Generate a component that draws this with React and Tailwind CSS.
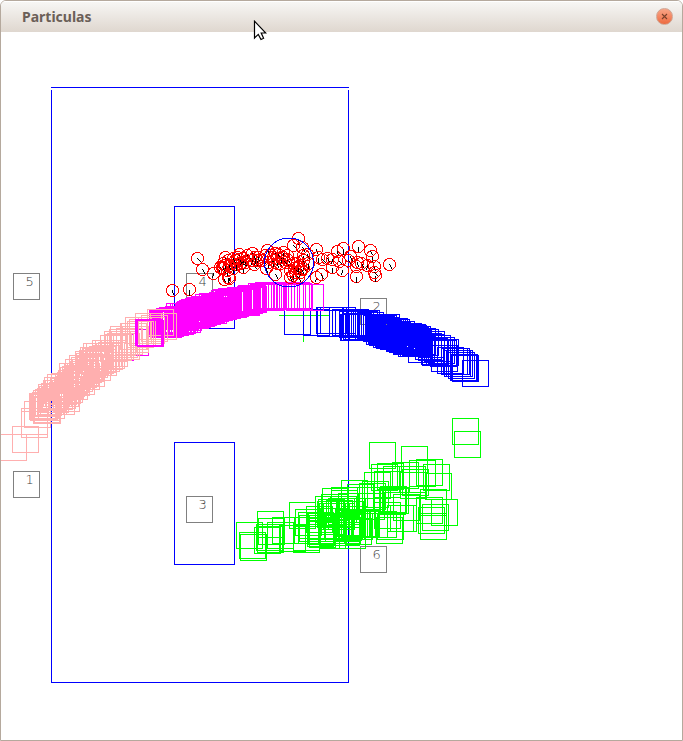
import React from "react";

// Particle positions: top-left corners of 26px squares, [x, y] pairs in thirds of a pixel.
const GREEN = { ox: 220, oy: 400, pts: [[697,55],[703,94],[448,127],[544,139],[454,193],[472,190],[463,214],[433,217],[490,199],[517,187],[568,181],[589,178],[610,193],[616,220],[547,208],[541,217],[536,199],[364,241],[382,253],[427,244],[418,250],[334,262],[334,271],[385,262],[355,280],[286,289],[295,298],[292,304],[325,295],[331,289],[208,307],[259,319],[226,328],[235,337],[238,346],[112,334],[115,355],[49,367],[58,397],[61,403],[103,382],[109,373],[112,379],[142,367],[157,352],[178,376],[220,373],[223,352],[262,361],[268,364],[220,379],[310,310],[349,337],[301,325],[346,343],[364,334],[379,340],[388,334],[397,330],[463,307],[472,340],[469,352],[451,334],[424,334],[487,262],[481,259],[520,283],[511,316],[502,316],[601,268],[589,292],[607,313],[595,322],[601,340],[634,298],[358,367],[298,367],[340,346],[400,332],[412,262],[358,295],[415,280],[355,340],[265,340],[295,350],[343,352],[352,304],[376,355],[325,310],[301,358],[307,304],[304,283],[298,310],[262,337],[265,355],[268,346],[307,265],[319,301],[346,328],[352,331],[358,328],[370,334],[349,304],[340,358],[301,340],[316,340],[478,265]] };
const BLUE = { ox: 260, oy: 220, pts: [[73,265],[130,268],[169,262],[172,271],[181,262],[208,262],[217,268],[226,270],[238,274],[241,283],[244,283],[247,268],[250,280],[170,262],[256,278],[262,272],[268,283],[274,274],[280,271],[286,283],[292,277],[298,283],[304,283],[310,286],[316,286],[319,295],[322,286],[328,298],[334,295],[340,304],[346,301],[340,283],[352,295],[355,304],[361,310],[364,295],[370,298],[376,310],[379,316],[385,304],[388,319],[394,316],[400,325],[406,310],[412,313],[415,330],[421,316],[427,322],[430,331],[418,313],[436,328],[445,349],[448,325],[457,328],[466,340],[475,343],[484,355],[487,358],[493,346],[499,358],[505,352],[511,361],[514,376],[517,358],[532,382],[544,385],[550,385],[553,391],[559,390],[565,397],[571,403],[574,403],[577,406],[607,421],[323,292],[343,298],[367,304],[382,313],[409,319],[424,325],[475,334],[427,328],[433,319],[421,331],[325,289],[331,286],[337,292],[349,307],[358,298],[373,307],[391,310],[397,319],[403,322]] };
const MAGENTA = { ox: 140, oy: 200, pts: [[472,253],[436,250],[430,247],[418,250],[439,253],[412,247],[400,247],[394,250],[385,250],[376,247],[367,250],[358,250],[352,247],[346,247],[355,253],[340,253],[325,250],[331,253],[298,256],[280,268],[276,265],[270,262],[262,262],[256,268],[250,265],[244,265],[247,271],[238,268],[232,271],[226,274],[220,268],[214,271],[208,276],[202,280],[196,280],[190,281],[184,282],[178,280],[172,289],[166,282],[160,292],[154,289],[148,293],[142,290],[136,293],[133,304],[130,302],[124,297],[118,300],[112,302],[108,307],[103,317],[97,310],[91,310],[85,317],[79,310],[73,322],[64,320],[58,320],[55,325],[52,331],[40,328],[34,331],[30,334],[28,331],[4,346],[295,256],[300,258],[205,278],[181,290],[151,296],[121,305],[61,325],[37,334],[289,262],[265,265],[292,259],[283,262],[241,274],[235,265],[223,277],[211,280],[199,283],[187,286],[175,292],[163,295],[145,301],[139,298],[127,307],[115,307],[106,313],[94,319],[88,322],[82,325],[76,319],[67,328],[49,325],[43,334],[46,334]] };
const MAGENTA_TAIL = { ox: 140, oy: 200, pts: [[-12,358],[-10,361],[-15,358]] };
const MAGENTA_STRAY = { ox: 140, oy: 200, pts: [[-54,386],[-98,403]] };
const PINK = { ox: 0, oy: 260, pts: [[1,523],[37,499],[64,454],[64,445],[73,424],[88,400],[91,403],[97,397],[100,412],[103,409],[100,391],[106,388],[115,373],[112,385],[121,385],[127,379],[130,361],[133,352],[142,343],[139,370],[145,385],[148,367],[154,340],[157,360],[163,352],[160,375],[169,349],[172,337],[178,310],[181,322],[184,340],[187,319],[190,328],[193,310],[196,298],[202,310],[205,325],[208,286],[211,304],[217,298],[220,310],[226,274],[226,289],[232,286],[235,300],[241,262],[244,274],[247,265],[250,250],[253,283],[259,250],[262,262],[268,259],[271,268],[277,241],[280,256],[286,241],[289,250],[295,247],[301,226],[304,241],[313,214],[316,223],[322,220],[328,208],[331,199],[334,214],[340,220],[349,205],[361,190],[367,199],[364,190],[376,172],[382,184],[388,178],[406,160],[415,172],[424,166],[442,148],[451,160],[100,403],[94,400],[103,412],[115,397],[118,379],[124,370],[136,361],[151,355],[166,340],[175,331],[199,316],[214,292],[229,280],[238,271],[256,268]] };

// Heading particles: circle centres, in thirds of a pixel.
const CIRCLES_A = [[97,271],[148,266],[172,175],[187,208],[218,220],[252,238],[265,232],[255,172],[250,190],[245,200],[250,205],[240,200],[265,180],[262,210],[275,190],[280,205],[285,180],[290,170],[296,163],[300,190],[310,200],[315,185],[308,175],[320,165],[335,160],[335,180],[343,193],[350,180],[355,172],[345,170],[365,180],[381,151],[375,165],[390,165],[385,185],[378,205],[400,180],[405,160],[406,221],[410,175],[420,190],[428,155],[430,170],[440,165],[436,185],[445,180],[450,210],[460,190],[460,225],[470,190],[475,115],[460,135],[487,140],[470,205],[465,215],[480,195],[490,180],[490,165],[490,205],[475,230],[480,215],[450,230],[256,196],[268,196],[289,193],[305,185],[298,178],[400,170],[415,163],[424,172],[410,190],[474,200],[462,205],[484,208],[268,234],[278,175]];
const CIRCLES_B = [[169,88],[175,110],[185,118],[200,115],[167,172],[184,163],[217,142],[232,94],[250,85],[236,122],[265,120],[247,151],[271,109],[293,79],[292,125],[287,169],[287,139],[302,130],[322,136],[331,91],[337,109],[343,139],[346,166],[343,157],[388,133],[217,118],[142,103],[145,130]];
const TICKS = [[1, 5], [0, 6], [4, 4], [3, 5], [-1, 5], [2, 5], [0, 5]];

const LABELS = [
  { n: "5", x: 13, y: 273 },
  { n: "1", x: 13, y: 471 },
  { n: "4", x: 186, y: 273 },
  { n: "3", x: 186, y: 496 },
  { n: "2", x: 360, y: 298 },
  { n: "6", x: 360, y: 546 },
];

function Squares({ set, color }) {
  return (
    <g stroke={color}>
      {set.pts.map(([x, y], i) => (
        <rect key={i} x={set.ox + Math.round(x / 3)} y={set.oy + Math.round(y / 3)} width="26" height="26" />
      ))}
    </g>
  );
}

function Headings({ pts, ox, oy }) {
  return pts.map(([x, y], i) => {
    const cx = ox + Math.round(x / 3);
    const cy = oy + Math.round(y / 3);
    const [dx, dy] = TICKS[i % TICKS.length];
    return (
      <g key={i}>
        <circle cx={cx} cy={cy} r="6" stroke="#ff0000" />
        <path d={`M${cx} ${cy}l${dx} ${dy}`} stroke="#000000" />
      </g>
    );
  });
}

function Simulation() {
  return (
    <svg
      role="img"
      aria-label="Particulas"
      viewBox="1 32 681 708"
      width="681"
      height="708"
      className="block max-w-none shrink-0"
      fill="none"
      shapeRendering="crispEdges"
    >
      <g transform="translate(0.5 0.5)">
        <g stroke="#808080">
          {LABELS.map(({ n, x, y }) => (
            <rect key={n} x={x} y={y} width="26" height="26" />
          ))}
        </g>
        <g className="font-['DejaVu_Sans',sans-serif] text-[13px] font-extralight" fill="#404040">
          {LABELS.map(({ n, x, y }) => (
            <text key={n} x={x + 12} y={y + 12}>{n}</text>
          ))}
        </g>
        <g stroke="#0000ff">
          <path d="M50.5 87H348.5M51 89.5V682H348V89.5" />
          <rect x="174" y="206" width="60" height="122" />
          <rect x="174" y="442" width="60" height="122" />
        </g>
        <path d="M278 315H329M303 290V341" stroke="#00ff00" />
        <Squares set={GREEN} color="#00ff00" />
        <Squares set={BLUE} color="#0000ff" />
        <Squares set={MAGENTA} color="#ff00ff" />
        <Squares set={MAGENTA_STRAY} color="#ff00ff" />
        <Squares set={PINK} color="#ffafaf" />
        <Squares set={MAGENTA_TAIL} color="#ff00ff" />
        <Headings pts={CIRCLES_A} ox={140} oy={200} />
        <Headings pts={CIRCLES_B} ox={260} oy={220} />
        <circle cx="288.5" cy="262" r="24.5" stroke="#0000ff" />
      </g>
    </svg>
  );
}

function Pointer() {
  return (
    <svg viewBox="0 0 14 21" className="pointer-events-none absolute top-[19px] left-[252px] h-[21px] w-[14px]" aria-hidden="true">
      <path d="M1.5 1.2V18L5.3 14.4L8 19.5L10.6 18.3L8.2 13H12.8Z" fill="#ffffff" stroke="#000000" strokeWidth="1.2" />
    </svg>
  );
}

export default function App() {
  return (
    <div className="relative flex min-h-screen flex-col overflow-hidden rounded-t-md border border-[#b5a99d] bg-white">
      <header className="flex h-[31px] shrink-0 items-center justify-between border-t border-white bg-linear-to-b from-[#f7f6f4] to-[#dfd7cf] pr-[9px] pb-px pl-[21px]">
        <h1 className="font-['Noto_Sans','Open_Sans',sans-serif] text-[14px] leading-5 font-bold text-[#6b5f58]">Particulas</h1>
        <button type="button" aria-label="Cerrar" className="flex size-[17px] items-center justify-center rounded-full border border-[#cfa593] bg-linear-to-b from-[#f9a587] to-[#ed6a3e]">
          <svg viewBox="0 0 7 7" className="size-[7px]" aria-hidden="true">
            <path d="M1 1L6 6M6 1L1 6" stroke="#7a402a" strokeWidth="1.1" />
          </svg>
        </button>
      </header>
      <main className="flex-1 overflow-hidden">
        <Simulation />
      </main>
      <Pointer />
    </div>
  );
}
